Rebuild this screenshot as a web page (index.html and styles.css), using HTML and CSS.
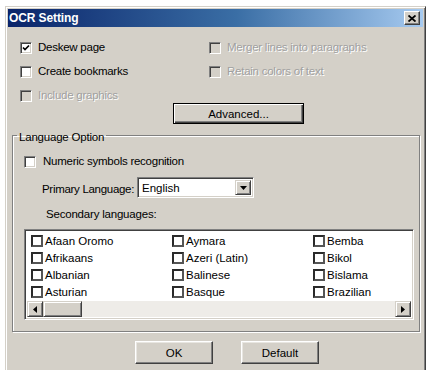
FILE: index.html
```html
<!DOCTYPE html>
<html>
<head>
<meta charset="utf-8">
<link rel="stylesheet" href="styles.css">
</head>
<body>
<div class="dialog">
  <div class="titlebar">
    <span class="title">OCR Setting</span>
    <span class="close"><svg width="8" height="7" viewBox="0 0 8 7"><path d="M0.5 0.5 L7.5 6.5 M7.5 0.5 L0.5 6.5" stroke="#000" stroke-width="1.8"/></svg></span>
  </div>
  <div class="content">
    <div class="opts">
      <label class="opt"><span class="cb"><svg width="8" height="8" viewBox="0 0 8 8"><path d="M1 3.5 L3 5.5 L7 1.5" stroke="#000" stroke-width="1.7" fill="none"/></svg></span>Deskew page</label>
      <label class="opt dis"><span class="cb"></span>Merger lines into paragraphs</label>
      <label class="opt"><span class="cb"></span>Create bookmarks</label>
      <label class="opt dis"><span class="cb"></span>Retain colors of text</label>
      <label class="opt dis"><span class="cb"></span>Include graphics</label>
    </div>
    <div class="adv-row"><span class="btn default">Advanced...</span></div>
    <fieldset class="group">
      <legend>Language Option</legend>
      <label class="opt numeric"><span class="cb"></span>Numeric symbols recognition</label>
      <div class="primary">
        <span class="plabel">Primary Language:</span>
        <span class="combo"><span class="ctext">English</span><span class="cbtn"><svg width="7" height="4" viewBox="0 0 7 4"><path d="M0 0 H7 L3.5 4 Z" fill="#000"/></svg></span></span>
      </div>
      <div class="seclabel">Secondary languages:</div>
      <div class="listbox">
        <div class="items">
          <div class="item"><span class="lcb"></span>Afaan Oromo</div>
          <div class="item"><span class="lcb"></span>Aymara</div>
          <div class="item"><span class="lcb"></span>Bemba</div>
          <div class="item"><span class="lcb"></span>Afrikaans</div>
          <div class="item"><span class="lcb"></span>Azeri (Latin)</div>
          <div class="item"><span class="lcb"></span>Bikol</div>
          <div class="item"><span class="lcb"></span>Albanian</div>
          <div class="item"><span class="lcb"></span>Balinese</div>
          <div class="item"><span class="lcb"></span>Bislama</div>
          <div class="item"><span class="lcb"></span>Asturian</div>
          <div class="item"><span class="lcb"></span>Basque</div>
          <div class="item"><span class="lcb"></span>Brazilian</div>
        </div>
        <div class="hscroll">
          <span class="sbtn"><svg width="4" height="7" viewBox="0 0 4 7"><path d="M4 0 V7 L0 3.5 Z" fill="#000"/></svg></span>
          <span class="thumb"></span>
          <span class="track"></span>
          <span class="sbtn"><svg width="4" height="7" viewBox="0 0 4 7"><path d="M0 0 V7 L4 3.5 Z" fill="#000"/></svg></span>
        </div>
      </div>
    </fieldset>
    <div class="buttons">
      <span class="btn">OK</span>
      <span class="btn">Default</span>
    </div>
  </div>
</div>
</body>
</html>
```
FILE: styles.css
```css
* { box-sizing: border-box; }
html, body { margin: 0; padding: 0; background: #fff; overflow: hidden; }
body {
  font-family: "Liberation Sans", Arial, sans-serif;
  font-size: 11.5px;
  color: #000;
}
.dialog {
  margin: 6px 0 0 5px;
  width: 421px;
  height: 380px;
  background: #d4d0c8;
  border: 1px solid;
  border-color: #d4d0c8 #404040 #404040 #d4d0c8;
  box-shadow: inset 1px 1px #fff, inset -1px -1px #808080;
  padding: 2px;
}
.titlebar {
  height: 18px;
  background: linear-gradient(to right, #0a246a, #3a6ea5 55%, #a6caf0);
  display: flex;
  align-items: center;
  justify-content: space-between;
  padding: 0 3px 0 1px;
}
.title {
  color: #fff;
  font-weight: bold;
  font-size: 12px;
  letter-spacing: -0.1px;
}
.close {
  width: 16px;
  height: 14px;
  background: #d4d0c8;
  border: 1px solid;
  border-color: #fff #404040 #404040 #fff;
  box-shadow: inset -1px -1px #808080;
  display: flex;
  align-items: center;
  justify-content: center;
}
.opts {
  display: grid;
  grid-template-columns: 189px 1fr;
  grid-auto-rows: 13px;
  row-gap: 11px;
  padding: 14px 0 0 12px;
}
.opt {
  display: flex;
  align-items: center;
  gap: 6px;
  line-height: 13px;
  white-space: nowrap;
  letter-spacing: -0.25px;
}
.opt.dis { color: #a0a0a0; text-shadow: 1px 1px #fff; }
.cb {
  width: 12px;
  height: 12px;
  flex: none;
  background: #fff;
  border: 1px solid;
  border-color: #808080 #fff #fff #808080;
  box-shadow: inset 1px 1px #404040, inset -1px -1px #d4d0c8;
  display: flex;
  align-items: center;
  justify-content: center;
}
.opt.dis .cb { background: #d4d0c8; }
.adv-row { padding-left: 165px; margin-top: 1px; }
.btn {
  display: inline-flex;
  align-items: center;
  justify-content: center;
  height: 23px;
  width: 78px;
  background: #d4d0c8;
  border: 1px solid;
  border-color: #fff #404040 #404040 #fff;
  box-shadow: inset -1px -1px #808080, inset 1px 1px #e8e6e1;
}
.btn.default {
  width: 131px;
  height: 21px;
  border: 1px solid #000;
  box-shadow: inset 1px 1px #fff, inset -1px -1px #404040, inset -2px -2px #808080;
}
.group {
  margin: 5px 3px 0 4px;
  padding: 0 5px 11px 4px;
  border: 1px solid #808080;
  box-shadow: inset 1px 1px #fff, 1px 1px #fff;
}
.group legend {
  padding: 0 2px;
  line-height: 13px;
  position: relative;
  top: 2px;
  letter-spacing: -0.2px;
}
.numeric { margin: 13px 0 0 7px; gap: 7px; }
.primary {
  display: flex;
  align-items: center;
  margin: 9px 0 0 25px;
  white-space: nowrap;
}
.plabel { width: 95px; padding-top: 2px; letter-spacing: -0.3px; }
.combo {
  width: 117px;
  height: 21px;
  background: #fff;
  border: 1px solid;
  border-color: #808080 #fff #fff #808080;
  box-shadow: inset 1px 1px #404040, inset -1px -1px #d4d0c8;
  display: flex;
  align-items: center;
  justify-content: space-between;
  padding: 2px;
}
.ctext { padding-left: 2px; }
.cbtn {
  width: 16px;
  height: 15px;
  background: #d4d0c8;
  border: 1px solid;
  border-color: #d4d0c8 #404040 #404040 #d4d0c8;
  box-shadow: inset 1px 1px #fff, inset -1px -1px #808080;
  display: flex;
  align-items: center;
  justify-content: center;
}
.seclabel { margin: 10px 0 0 29px; line-height: 13px; letter-spacing: -0.2px; }
.listbox {
  margin: 8px 0 0 7px;
  height: 91px;
  background: #fff;
  border: 1px solid;
  border-color: #808080 #fff #fff #808080;
  box-shadow: inset 1px 1px #404040, inset -1px -1px #d4d0c8;
  padding: 2px;
  display: flex;
  flex-direction: column;
}
.items {
  display: grid;
  grid-template-columns: 141px 141px 1fr;
  grid-auto-rows: 17px;
  padding-left: 4px;
  flex: 1;
}
.item {
  display: flex;
  align-items: center;
  gap: 2px;
  white-space: nowrap;
}
.lcb {
  width: 12px;
  height: 12px;
  border: 2px solid #2a2a2a;
  border-right-color: #555;
  border-bottom-color: #555;
  background: #fff;
  flex: none;
}
.hscroll {
  height: 16px;
  display: flex;
}
.sbtn, .thumb {
  width: 16px;
  height: 16px;
  background: #d4d0c8;
  border: 1px solid;
  border-color: #d4d0c8 #404040 #404040 #d4d0c8;
  box-shadow: inset 1px 1px #fff, inset -1px -1px #808080;
  display: flex;
  align-items: center;
  justify-content: center;
  flex: none;
}
.thumb { width: 39px; }
.track {
  flex: 1;
  background-color: #eeece8;
}
.buttons {
  display: flex;
  gap: 28px;
  margin: 9px 0 0 127px;
}
```
